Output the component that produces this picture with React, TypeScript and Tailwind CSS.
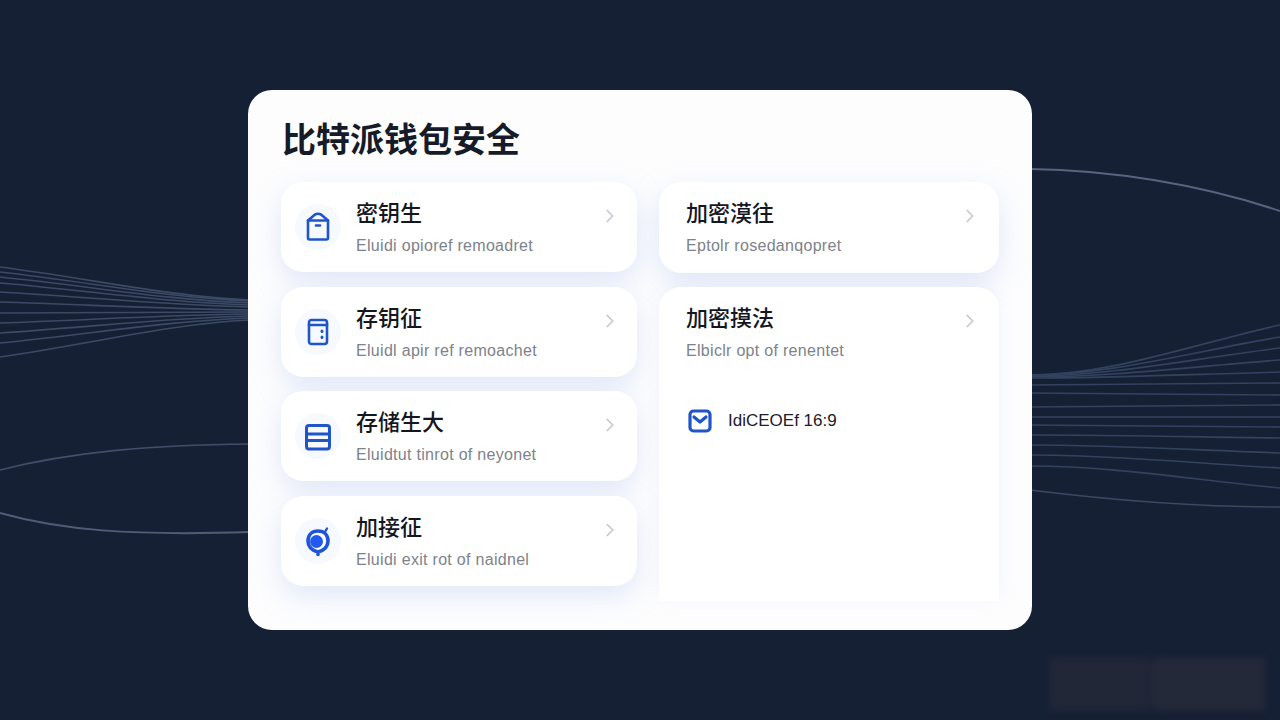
import React from 'react';
import { ChevronRight } from 'lucide-react';

const FONT = "font-['Liberation_Sans','Noto_Sans_CJK_SC',sans-serif]";

const LEFT_ROWS = [
  { title: '密钥生', sub: 'Eluidi opioref remoadret', icon: 'box' },
  { title: '存钥征', sub: 'Eluidl apir ref remoachet', icon: 'door' },
  { title: '存储生大', sub: 'Eluidtut tinrot of neyonet', icon: 'list' },
  { title: '加接征', sub: 'Eluidi exit rot of naidnel', icon: 'ring' },
];

// y values where each background line enters and leaves
const RIGHT_FAN = [
  [375, 325], [375, 337], [376, 348], [377, 360], [378, 372], [385, 383], [393, 395],
  [407, 405], [417, 417], [425, 427], [435, 438], [445, 453], [455, 468], [466, 488],
];
const LEFT_FAN = [
  [267, 300], [272, 301], [277, 303], [283, 305], [292, 307], [302, 310], [313, 312],
  [323, 314], [333, 316], [343, 318], [357, 320],
];

function Backdrop() {
  return (
    <svg className="absolute inset-0 h-full w-full" viewBox="0 0 1280 720" fill="none">
      {LEFT_FAN.map(([a, b]) => (
        <path
          key={a}
          d={`M0 ${a} C 90 ${a + (b - a) * 0.35}, 170 ${b - (b - a) * 0.1}, 250 ${b}`}
          stroke="#3c4a66"
          strokeWidth="1.6"
        />
      ))}
      <path d="M0 470 C 70 452, 150 445, 250 444" stroke="#414f6a" strokeWidth="1.6" />
      <path d="M0 513 C 60 530, 130 536, 250 532" stroke="#4f5d78" strokeWidth="2" />
      <path d="M1030 169 C 1110 170, 1200 184, 1280 211" stroke="#566480" strokeWidth="2" />
      {RIGHT_FAN.map(([a, b]) => (
        <path
          key={b}
          d={`M1030 ${a} C 1110 ${a}, 1190 ${a + (b - a) * 0.6}, 1280 ${b}`}
          stroke="#33425e"
          strokeWidth="1.6"
        />
      ))}
      <path d="M1030 490 C 1110 500, 1190 507, 1280 507" stroke="#3a4863" strokeWidth="1.5" />
    </svg>
  );
}

function RowIcon({ name }: { name: string }) {
  return (
    <div className="flex h-[46px] w-[46px] shrink-0 items-center justify-center rounded-full bg-[#f6f9fe]">
      <svg width="26" height="32" viewBox="0 0 26 32" fill="none" stroke="#1f55c8" strokeWidth="2.6" strokeLinejoin="round" strokeLinecap="round">
        {name === 'box' && (
          <>
            <path d="M3 9.5 L10 3.5 Q13 2 16 3.5 L23 9.5 V27 Q23 28.5 21.5 28.5 H4.5 Q3 28.5 3 27 Z" />
            <path d="M3 9.5 H23" />
            <path d="M11 14.5 H15" />
          </>
        )}
        {name === 'door' && (
          <>
            <rect x="4" y="4" width="18" height="24" rx="2.5" />
            <path d="M4 9 H22" />
            <path d="M17 15 V15.5 M17 21 V21.5" strokeWidth="3" />
          </>
        )}
        {name === 'list' && (
          <>
            <rect x="1.5" y="5.5" width="23" height="23.5" rx="2.5" strokeWidth="3" />
            <path d="M2 14 H24 M2 20.5 H24" strokeWidth="3" />
          </>
        )}
        {name === 'ring' && (
          <>
            <path d="M13 27 C 6 25, 3 21, 3 16 C 3 10, 7 6, 13 6 C 19 6, 23 10, 23 16 C 23 21, 20 25, 13 27 Z" strokeWidth="3.6" fill="#ffffff" stroke="#1f55d8" />
            <circle cx="11.5" cy="16.5" r="6.5" fill="#1f5bf0" stroke="none" />
            <path d="M20.5 6 L22 3.5" strokeWidth="2.4" />
            <circle cx="13" cy="29.5" r="1.8" fill="#1f55c8" stroke="none" />
          </>
        )}
      </svg>
    </div>
  );
}

function Texts({ title, sub }: { title: string; sub: string }) {
  return (
    <div className="min-w-0 flex-1">
      <p className="text-[22px] leading-[30px] font-medium text-[#14171f]">{title}</p>
      <p className="mt-[2px] text-[16px] leading-[30px] tracking-[0.3px] text-[#7d828b]">{sub}</p>
    </div>
  );
}

export default function App() {
  return (
    <div className={`relative flex h-[720px] w-[1280px] items-center justify-center overflow-hidden bg-[#162035] ${FONT}`}>
      <Backdrop />

      {/* blurred watermark, bottom right */}
      <div className="absolute right-[15px] bottom-[10px] flex gap-[2px] blur-[3px]">
        <div className="h-[52px] w-[98px] bg-[#222738]" />
        <div className="h-[52px] w-[115px] rounded-l-lg bg-[#242939]" />
      </div>

      <div className="relative h-[540px] w-[784px] rounded-[24px] bg-[#fdfdfe] px-[33px] pt-[27px]">
        <h1 className="pl-[1px] text-[34px] leading-[46px] font-bold text-[#151b28]">比特派钱包安全</h1>

        <div className="mt-[19px] flex gap-[22px]">
          <div className="flex w-[356px] flex-col gap-[14.6px]">
            {LEFT_ROWS.map(row => (
              <div
                key={row.title}
                className="flex h-[90px] items-center rounded-[22px] bg-white pr-[16px] pl-[14px] shadow-[0_10px_28px_rgba(170,190,235,0.34)]"
              >
                <RowIcon name={row.icon} />
                <div className="ml-[15px] flex min-w-0 flex-1 items-start self-start pt-[17px]">
                  <Texts title={row.title} sub={row.sub} />
                  <ChevronRight size={22} strokeWidth={1.8} className="mt-[6px] shrink-0 text-[#c4c7cd]" />
                </div>
              </div>
            ))}
          </div>

          <div className="flex w-[340px] flex-col gap-[14px]">
            <div className="flex h-[91px] items-start rounded-[22px] bg-white pt-[17px] pr-[18px] pl-[27px] shadow-[0_10px_28px_rgba(170,190,235,0.34)]">
              <Texts title="加密漠往" sub="Eptolr rosedanqopret" />
              <ChevronRight size={22} strokeWidth={1.8} className="mt-[6px] shrink-0 text-[#c4c7cd]" />
            </div>
            <div className="h-[314px] rounded-t-[22px] bg-white pt-[17px] pr-[18px] pl-[27px] shadow-[0_-4px_18px_rgba(170,190,235,0.14)]">
              <div className="flex items-start">
                <Texts title="加密摸法" sub="Elbiclr opt of renentet" />
                <ChevronRight size={22} strokeWidth={1.8} className="mt-[6px] shrink-0 text-[#c4c7cd]" />
              </div>
              <div className="mt-[43px] flex items-center gap-[16px] pl-[2px]">
                <svg width="24" height="24" viewBox="0 0 24 24" fill="none" stroke="#1f55c8" strokeWidth="3.2" strokeLinejoin="round" strokeLinecap="round">
                  <rect x="2" y="2" width="20" height="20" rx="3.5" />
                  <path d="M6 8 L12 13 L18 8" />
                </svg>
                <span className="text-[17px] leading-[24px] text-[#1d2026]">IdiCEOEf 16:9</span>
              </div>
            </div>
          </div>
        </div>
      </div>
    </div>
  );
}
